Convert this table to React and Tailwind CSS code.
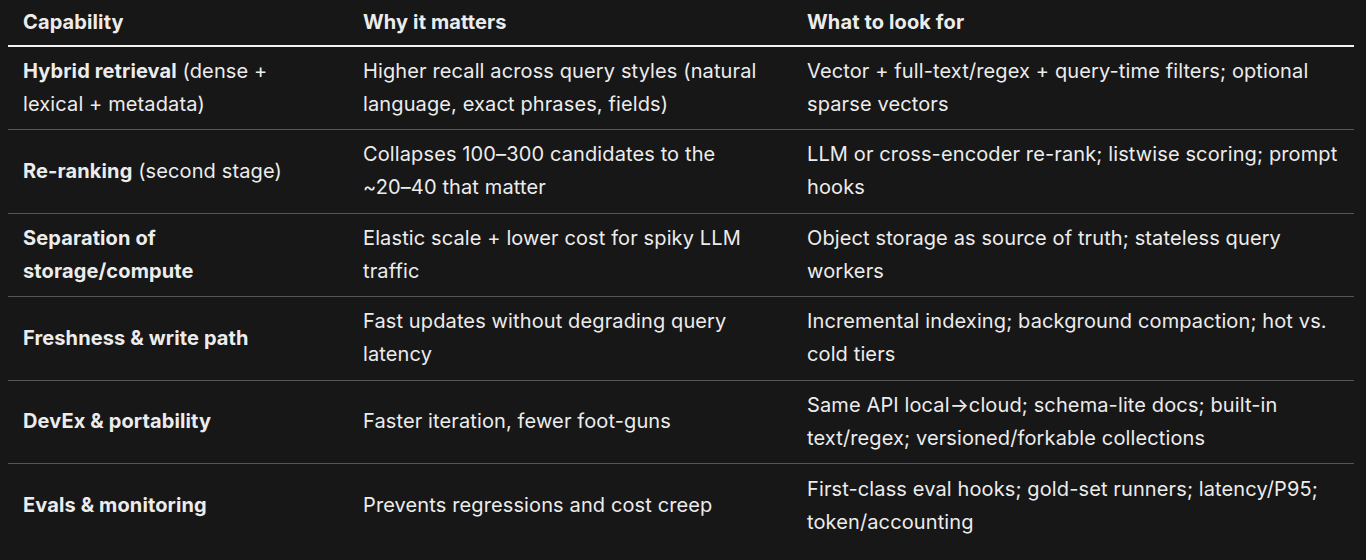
import React from 'react';

const ROWS = [
  {
    cap: <><b className="font-bold">Hybrid retrieval</b> (dense + lexical + metadata)</>,
    why: 'Higher recall across query styles (natural language, exact phrases, fields)',
    look: 'Vector + full-text/regex + query-time filters; optional sparse vectors',
  },
  {
    cap: <><b className="font-bold">Re-ranking</b> (second stage)</>,
    why: <>Collapses 100–300 candidates to the <span className="whitespace-nowrap">~20–40</span> that matter</>,
    look: 'LLM or cross-encoder re-rank; listwise scoring; prompt hooks',
  },
  {
    cap: <b className="font-bold">Separation of storage/compute</b>,
    why: 'Elastic scale + lower cost for spiky LLM traffic',
    look: 'Object storage as source of truth; stateless query workers',
  },
  {
    cap: <b className="font-bold">Freshness &amp; write path</b>,
    why: 'Fast updates without degrading query latency',
    look: 'Incremental indexing; background compaction; hot vs. cold tiers',
  },
  {
    cap: <b className="font-bold">DevEx &amp; portability</b>,
    why: 'Faster iteration, fewer foot-guns',
    look: 'Same API local→cloud; schema-lite docs; built-in text/regex; versioned/forkable collections',
  },
  {
    cap: <b className="font-bold">Evals &amp; monitoring</b>,
    why: 'Prevents regressions and cost creep',
    look: 'First-class eval hooks; gold-set runners; latency/P95; token/accounting',
  },
];

export default function App() {
  return (
    <div
      className="w-[1366px] h-[560px] bg-[#171717] text-[#ececec] px-2 overflow-hidden"
      style={{ fontFamily: 'Inter, "Noto Sans", sans-serif' }}
    >
      <table className="w-[1346px] table-fixed border-collapse text-[20px] leading-[33px] tracking-[0.12px]">
        <colgroup>
          <col className="w-[340px]" />
          <col className="w-[444px]" />
          <col className="w-[562px]" />
        </colgroup>
        <thead>
          <tr className="h-[46px] border-b-2 border-[#f2f2f2]">
            <th className="text-left font-bold pl-[15px] pr-[30px] align-middle">Capability</th>
            <th className="text-left font-bold px-[15px] align-middle">Why it matters</th>
            <th className="text-left font-bold px-[15px] align-middle">What to look for</th>
          </tr>
        </thead>
        <tbody>
          {ROWS.map((r, i) => (
            <tr
              key={i}
              className={`h-[83.5px] ${i < ROWS.length - 1 ? 'border-b border-[#555555]' : ''}`}
            >
              <td className="pl-[15px] pr-[40px] align-middle">{r.cap}</td>
              <td className="px-[15px] align-middle">{r.why}</td>
              <td className="px-[15px] align-middle">{r.look}</td>
            </tr>
          ))}
        </tbody>
      </table>
    </div>
  );
}
